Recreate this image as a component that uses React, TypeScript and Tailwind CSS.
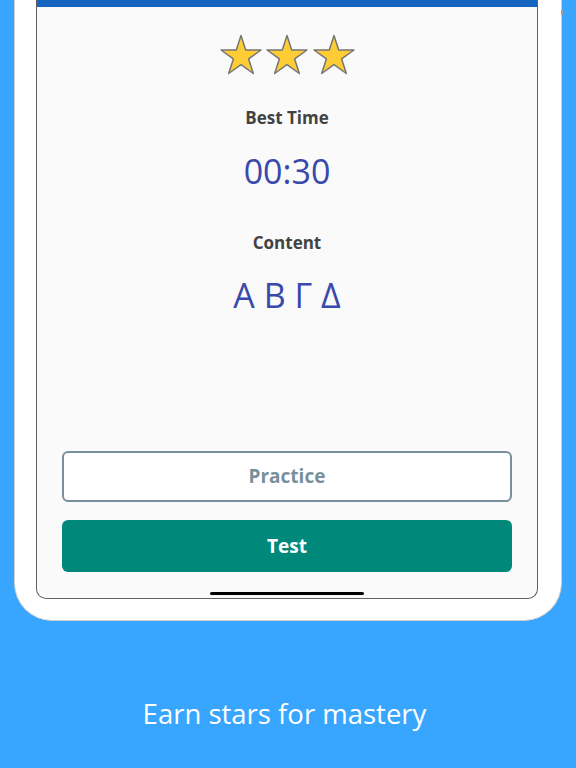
import React from "react";

function Star() {
  return (
    <svg width="44" height="42" viewBox="0 0 44 42">
      <polygon
        points="22,1.5 26.71,16.01 41.97,16 29.63,24.98 34.34,39.5 22,30.52 9.66,39.5 14.37,24.98 2.03,16 17.29,16.01"
        fill="#fecd35"
        stroke="#767676"
        strokeWidth="1.5"
        strokeLinejoin="round"
      />
    </svg>
  );
}

export default function App() {
  return (
    <div
      className="w-full h-[768px] bg-[#38a5ff] flex flex-col items-center overflow-hidden"
      style={{ fontFamily: '"Open Sans", "Noto Sans", sans-serif' }}
    >
      <div className="relative w-[548px] h-[621px] bg-white border-x border-b border-[#cfcfcf] rounded-b-[38px] pl-[21px] pr-[23px] flex-shrink-0">
        <div className="absolute right-[-2px] top-[10px] w-[2px] h-[5px] bg-[#9e9e9e]" />
        <div className="h-[599px] bg-[#fafafa] border-x border-b border-[#616161] rounded-b-[10px] flex flex-col overflow-hidden">
          <div className="h-[7px] bg-[#1565c0] flex-shrink-0" />
          <div className="flex justify-center gap-[2.5px] mt-[26.5px]">
            <Star />
            <Star />
            <Star />
          </div>
          <div className="mt-[30px] text-center text-[17px] leading-[24px] font-bold text-[#424242]">
            Best Time
          </div>
          <div className="mt-[19px] text-center text-[34px] leading-[44px] text-[#3949ab]">
            00:30
          </div>
          <div className="mt-[38px] text-center text-[17px] leading-[24px] font-bold text-[#424242]">
            Content
          </div>
          <div className="mt-[18px] text-center text-[34px] leading-[44px] text-[#3949ab]">
            Α Β Γ Δ
          </div>
          <div className="flex-1" />
          <div className="px-[25px] flex flex-col gap-[18px]">
            <button className="h-[51px] w-full rounded-[6px] border-2 border-[#78909c] bg-white text-[19px] font-bold text-[#78909c]">
              Practice
            </button>
            <button className="h-[52px] w-full rounded-[6px] bg-[#00897b] text-[19px] font-bold text-white">
              Test
            </button>
          </div>
          <div className="mt-[20px] mb-[3px] flex justify-center">
            <div className="w-[154px] h-[3px] rounded-full bg-black" />
          </div>
        </div>
      </div>
      <div className="mt-[75px] pr-[7px] text-center text-[27.5px] leading-[36px] text-white">
        Earn stars for mastery
      </div>
    </div>
  );
}
